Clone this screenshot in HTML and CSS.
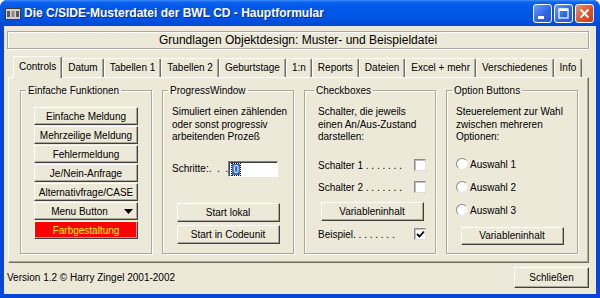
FILE: index.html
```html
<!DOCTYPE html>
<html lang="de">
<head>
    <meta charset="UTF-8">
    <title>Hauptformular</title>
    <link rel="stylesheet" href="styles.css">
</head>
<body>
    <div class="window">
        <div class="titlebar">
            <svg class="appicon" width="16" height="12" viewBox="0 0 16 12">
                <rect x="0.5" y="0.5" width="15" height="11" fill="#d4d0c8" stroke="#3c3c3c"/>
                <rect x="2" y="3" width="3" height="6" fill="#5a5a5a"/>
                <rect x="6.5" y="3" width="3" height="6" fill="#8a8a8a"/>
                <rect x="11" y="3" width="3" height="6" fill="#5a5a5a"/>
            </svg>
            <span class="title">Die C/SIDE-Musterdatei der BWL CD - Hauptformular</span>
            <div class="caption-btns">
                <span class="cbtn min"><svg width="17" height="17" viewBox="0 0 17 17"><rect x="4" y="11" width="6" height="3" fill="#fff"/></svg></span>
                <span class="cbtn max"><svg width="17" height="17" viewBox="0 0 17 17"><rect x="4" y="4" width="9" height="9" fill="none" stroke="#fff" stroke-width="1.2"/><rect x="4" y="3.5" width="9" height="2.5" fill="#fff"/></svg></span>
                <span class="cbtn close"><svg width="17" height="17" viewBox="0 0 17 17"><path d="M4.5 4.5 L12.5 12.5 M12.5 4.5 L4.5 12.5" stroke="#fff" stroke-width="2"/></svg></span>
            </div>
        </div>

        <div class="client">
            <div class="banner">Grundlagen Objektdesign: Muster- und Beispieldatei</div>

            <div class="tabs">
                <span class="tab active">Controls</span>
                <span class="tab">Datum</span>
                <span class="tab">Tabellen 1</span>
                <span class="tab">Tabellen 2</span>
                <span class="tab">Geburtstage</span>
                <span class="tab">1:n</span>
                <span class="tab">Reports</span>
                <span class="tab">Dateien</span>
                <span class="tab">Excel + mehr</span>
                <span class="tab">Verschiedenes</span>
                <span class="tab">Info</span>
            </div>

            <div class="panel">
                <fieldset class="group">
                    <legend>Einfache Funktionen</legend>
                    <div class="btnlist">
                        <button class="btn">Einfache Meldung</button>
                        <button class="btn">Mehrzeilige Meldung</button>
                        <button class="btn">Fehlermeldung</button>
                        <button class="btn">Je/Nein-Anfrage</button>
                        <button class="btn">Alternativfrage/CASE</button>
                        <button class="btn menu"><span class="menu-label">Menu Button</span><svg width="9" height="5" viewBox="0 0 9 5"><path d="M0 0 H9 L4.5 5 Z" fill="#000"/></svg></button>
                        <button class="btn red">Farbgestaltung</button>
                    </div>
                </fieldset>

                <fieldset class="group">
                    <legend>ProgressWindow</legend>
                    <p class="desc">Simuliert einen zählenden<br>oder sonst progressiv<br>arbeitenden Prozeß</p>
                    <div class="steps">
                        <span>Schritte:. &nbsp;. &nbsp;.</span>
                        <span class="field"><span class="sel">0</span></span>
                    </div>
                    <button class="btn wide start">Start lokal</button>
                    <button class="btn wide">Start in Codeunit</button>
                </fieldset>

                <fieldset class="group checks">
                    <legend>Checkboxes</legend>
                    <p class="desc">Schalter, die jeweils<br>einen An/Aus-Zustand<br>darstellen:</p>
                    <div class="checkrow first">
                        <span>Schalter 1 . . . . . . .</span>
                        <span class="box"></span>
                    </div>
                    <div class="checkrow">
                        <span>Schalter 2 . . . . . . .</span>
                        <span class="box"></span>
                    </div>
                    <button class="btn wide var">Variableninhalt</button>
                    <div class="checkrow last">
                        <span>Beispiel. . . . . . . .</span>
                        <span class="box"><svg width="9" height="9" viewBox="0 0 9 9"><path d="M1 4 L3.5 6.5 L8 1.5" fill="none" stroke="#000" stroke-width="1.8"/></svg></span>
                    </div>
                </fieldset>

                <fieldset class="group">
                    <legend>Option Buttons</legend>
                    <p class="desc">Steuerelement zur Wahl<br>zwischen mehreren<br>Optionen:</p>
                    <div class="radios">
                        <label class="radio"><span class="dot"></span>Auswahl 1</label>
                        <label class="radio"><span class="dot"></span>Auswahl 2</label>
                        <label class="radio"><span class="dot"></span>Auswahl 3</label>
                    </div>
                    <button class="btn wide var2">Variableninhalt</button>
                </fieldset>
            </div>

            <div class="footer">
                <span>Version 1.2 © Harry Zingel 2001-2002</span>
                <button class="btn close-btn">Schließen</button>
            </div>
        </div>
    </div>
</body>
</html>
```

FILE: styles.css
```css
* {
    box-sizing: border-box;
}
body {
    margin: 0;
    font-family: "Liberation Sans", Arial, sans-serif;
    font-size: 10px;
    color: #000;
    background: #fff;
}
.window {
    width: 600px;
    height: 298px;
    display: flex;
    flex-direction: column;
    background: #0846d8;
    border-radius: 7px 7px 0 0;
    overflow: hidden;
}
.titlebar {
    flex-shrink: 0;
    height: 26px;
    display: flex;
    align-items: center;
    padding: 0 6px 0 5px;
    color: #fff;
    border-radius: 7px 7px 0 0;
    background: linear-gradient(#3d8ef8 0, #0f64f0 2px, #0058ea 7px, #0054e3 18px, #0049d4 26px);
}
.appicon {
    margin-top: 2px;
}
.title {
    margin-left: 3px;
    font-size: 12px;
    font-weight: bold;
    text-shadow: 1px 1px 0 #0a2a8c;
    flex: 1;
}
.caption-btns {
    display: flex;
    gap: 2px;
}
.cbtn {
    width: 19px;
    height: 19px;
    border: 1px solid #fff;
    border-radius: 3px;
    display: flex;
    background: linear-gradient(135deg, #6b9cf6, #2c64e4 60%, #2455d6);
}
.cbtn.close {
    background: linear-gradient(135deg, #f0906e, #e0532e 55%, #c8391a);
}
.client {
    flex: 1;
    min-height: 0;
    margin: 0 4px 4px;
    background: #ece9d8;
    display: flex;
    flex-direction: column;
    padding: 5px 7px 0 3px;
}
.banner {
    flex-shrink: 0;
    height: 18px;
    border: 1px solid #aca899;
    box-shadow: inset 1px 1px 0 #fff, 1px 1px 0 #fff;
    font-size: 12px;
    line-height: 16px;
    text-align: center;
}
.tabs {
    flex-shrink: 0;
    display: flex;
    align-items: flex-end;
    height: 21px;
    margin-top: 7px;
    padding-left: 6px;
    position: relative;
    z-index: 1;
}
.tab {
    height: 19px;
    line-height: 17px;
    padding: 0 5px;
    border-top: 1px solid #fff;
    border-left: 1px solid #fff;
    border-right: 1px solid #716f64;
    box-shadow: inset -1px 0 0 #aca899;
    border-radius: 2px 2px 0 0;
    white-space: nowrap;
}
.tab.active {
    height: 22px;
    margin-bottom: -1px;
    background: #ece9d8;
    line-height: 19px;
}
.panel {
    flex: 1;
    min-height: 0;
    margin-left: 1px;
    border: 1px solid;
    border-color: #fff #716f64 #716f64 #fff;
    box-shadow: inset -1px -1px 0 #aca899;
    display: grid;
    grid-template-columns: repeat(4, 132px);
    column-gap: 10px;
    padding: 6px 0 8px 11px;
}
.group {
    margin: 0;
    min-width: 0;
    padding: 0 9px;
    border: 1px solid #aca899;
    box-shadow: inset 1px 1px 0 #fff, 1px 1px 0 #fff;
    display: flex;
    flex-direction: column;
    white-space: nowrap;
}
.group legend {
    padding: 0 2px;
    margin-left: -4px;
    line-height: 13px;
}
.group.checks {
    padding-left: 13px;
}
.btn {
    font-family: inherit;
    font-size: 10px;
    color: #000;
    background: #ece9d8;
    border: 1px solid;
    border-color: #fff #404040 #404040 #fff;
    box-shadow: inset -1px -1px 0 #aca899;
    padding: 0;
    margin: 0;
    height: 18px;
    white-space: nowrap;
}
.btnlist {
    display: flex;
    flex-direction: column;
    align-items: center;
    gap: 1px;
    margin-top: 10px;
}
.btnlist .btn {
    width: 104px;
}
.btn.menu {
    display: flex;
    align-items: center;
    padding: 0 4px 0 0;
}
.menu-label {
    flex: 1;
}
.btn.red {
    background: #ff0000;
    color: #ffff00;
}
.desc {
    margin: 9px 0 0;
    line-height: 12.5px;
}
.steps {
    display: flex;
    align-items: center;
    justify-content: space-between;
    margin-top: 17px;
    padding-right: 6px;
}
.field {
    width: 57px;
    height: 16px;
    background: #fff;
    border: 1px solid;
    border-color: #808080 #fff #fff #808080;
    box-shadow: inset 1px 1px 0 #404040;
    padding: 2px 0 0 3px;
}
.sel {
    display: inline-block;
    background: #316ac5;
    color: #fff;
    line-height: 11px;
    padding: 0 1px;
    outline: 1px dotted #000;
}
.btn.wide {
    width: 103px;
    height: 19px;
    align-self: center;
}
.btn.start {
    margin-top: 26px;
    margin-bottom: 3px;
}
.checkrow {
    display: flex;
    align-items: center;
    justify-content: space-between;
    height: 13px;
    margin-top: 9px;
}
.checkrow.first {
    margin-top: 15px;
}
.checkrow.last {
    margin-top: 7px;
}
.btn.var {
    margin-top: 8px;
}
.box {
    flex-shrink: 0;
    width: 12px;
    height: 12px;
    background: #fff;
    border: 1px solid;
    border-color: #8a8a8a #e0e0e0 #e0e0e0 #8a8a8a;
    box-shadow: inset 1px 1px 0 #c0c0c0;
    display: flex;
    align-items: center;
    justify-content: center;
}
.radios {
    display: flex;
    flex-direction: column;
    gap: 10px;
    margin-top: 14px;
}
.radio {
    display: flex;
    align-items: center;
    height: 13px;
    gap: 2px;
}
.dot {
    width: 12px;
    height: 12px;
    border-radius: 50%;
    background: #fff;
    border: 1px solid;
    border-color: #8a8a8a #e8e8e8 #e8e8e8 #8a8a8a;
}
.btn.var2 {
    margin-top: 10px;
    height: 18px;
}
.footer {
    flex-shrink: 0;
    height: 31px;
    display: flex;
    align-items: center;
    justify-content: space-between;
    padding-bottom: 2px;
}
.btn.close-btn {
    width: 75px;
    height: 21px;
}
```
